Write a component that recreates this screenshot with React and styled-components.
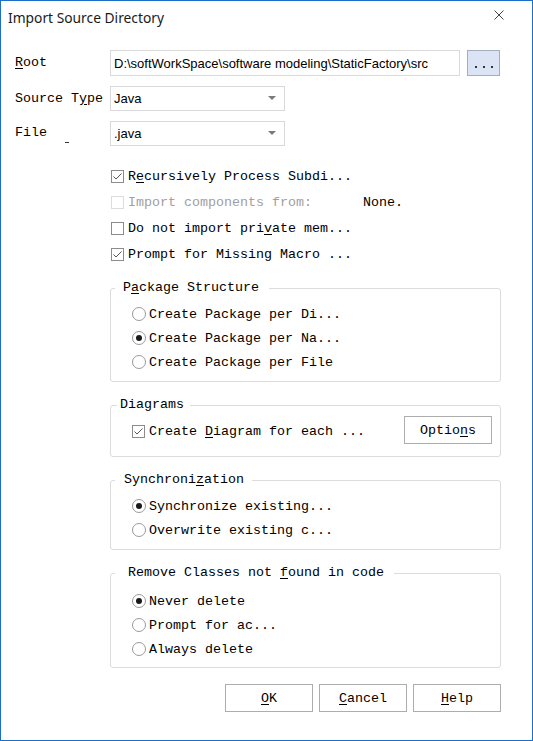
import React from 'react';
import styled, { createGlobalStyle } from 'styled-components';

const mono = `"Liberation Mono", "DejaVu Sans Mono", monospace`;
const sans = `"Liberation Sans", Arial, sans-serif`;

const Global = createGlobalStyle`
  html, body { margin: 0; padding: 0; background: #fff; }
  body { font-family: ${mono}; color: #000; }
  * { box-sizing: border-box; }
`;

const Window = styled.div`
  width: 533px;
  height: 741px;
  border: 1px solid #1b6fc9;
  background: #fff;
  display: flex;
  flex-direction: column;
  font-family: ${mono};
  font-size: 13.33px;
`;

const TitleBar = styled.div`
  height: 34px;
  display: flex;
  align-items: center;
  justify-content: space-between;
  padding-left: 7px;
`;

const Title = styled.div`
  font-family: "Noto Sans", "Open Sans", sans-serif;
  font-size: 13.8px;
  color: #1a1a1a;
  margin-top: -1px;
`;

const CloseButton = styled.div`
  width: 28px;
  height: 28px;
  margin-right: 19px;
  margin-bottom: 6px;
  display: flex;
  align-items: center;
  justify-content: center;
`;

const Body = styled.div`
  padding: 15px 31px 0 14px;
  display: flex;
  flex-direction: column;
`;

const FormGrid = styled.div`
  display: grid;
  grid-template-columns: 95px 1fr;
  row-gap: 10px;
  align-items: center;
`;

const Label = styled.div`
  font-family: ${mono};
  font-size: 13.33px;
  line-height: 16px;
  white-space: pre;
`;

const U = styled.span`
  text-decoration: underline;
  text-underline-offset: 2px;
`;

const SpaceMark = styled.span`
  display: inline-block;
  width: 4px;
  height: 1px;
  background: #333;
  vertical-align: -7px;
  margin-left: 18px;
`;

const FieldRow = styled.div`
  display: flex;
  gap: 7px;
  align-items: stretch;
`;

const TextField = styled.div`
  width: 350px;
  height: 26px;
  border: 1px solid #d9d9d9;
  display: flex;
  align-items: center;
  padding-left: 3px;
  font-family: ${sans};
  font-size: 13px;
  white-space: nowrap;
  overflow: hidden;
`;

const BrowseButton = styled.div`
  width: 33px;
  height: 26px;
  background: #dae4f4;
  border: 1px solid #a3adbd;
  display: flex;
  align-items: flex-end;
  justify-content: center;
  padding-bottom: 7px;
  gap: 6px;
`;

const Dot = styled.span`
  width: 2px;
  height: 2px;
  background: #333;
`;

const Select = styled.div`
  width: 175px;
  height: 25px;
  border: 1px solid #d9d9d9;
  display: flex;
  align-items: center;
  justify-content: space-between;
  padding: 0 8px 0 3px;
  font-family: ${sans};
  font-size: 13px;
`;

const Options = styled.div`
  margin-left: 95px;
  margin-top: 17px;
  display: flex;
  flex-direction: column;
`;

const CheckRow = styled.div`
  height: 26px;
  display: flex;
  align-items: center;
  padding-left: 1px;
  color: ${(p) => (p.$disabled ? '#a0a0a0' : '#000')};
  white-space: pre;
`;

const Box = styled.span`
  width: 13px;
  height: 13px;
  border: 1px solid ${(p) => (p.$disabled ? '#dcdcdc' : '#8c8c8c')};
  background: #fff;
  margin-right: 4px;
  display: inline-flex;
  align-items: center;
  justify-content: center;
  flex: none;
`;

const Value = styled.span`
  margin-left: 51px;
  color: #000;
`;

const Group = styled.fieldset`
  margin: ${(p) => p.$mt}px 0 0 0;
  border: 1px solid #dcdcdc;
  border-radius: 3px;
  padding: 0 4px ${(p) => p.$pb}px 4px;
  min-inline-size: 0;
`;

const Legend = styled.legend`
  padding: 0 ${(p) => p.$pr}px 0 ${(p) => p.$pl}px;
  margin-left: ${(p) => p.$ml || 0}px;
  line-height: 16px;
  font-size: 13.33px;
  white-space: pre;
`;

const GroupBody = styled.div`
  padding-top: ${(p) => p.$pt}px;
  padding-left: 17px;
  display: flex;
  flex-direction: column;
`;

const RadioRow = styled.div`
  height: 24px;
  display: flex;
  align-items: center;
  white-space: pre;
`;

const Circle = styled.span`
  width: 14px;
  height: 14px;
  border-radius: 50%;
  border: 1px solid #9a9a9a;
  background: #fff;
  margin-right: 3px;
  display: inline-flex;
  align-items: center;
  justify-content: center;
  flex: none;
  &::after {
    content: '';
    width: 6px;
    height: 6px;
    border-radius: 50%;
    background: ${(p) => (p.$on ? '#1a1a1a' : 'transparent')};
  }
`;

const DiagramRow = styled.div`
  height: 28px;
  display: flex;
  align-items: center;
  justify-content: space-between;
  padding-right: 4px;
  white-space: pre;
`;

const DiagramCheck = styled.div`
  display: flex;
  align-items: center;
  margin-top: 3px;
`;

const PushButton = styled.div`
  width: ${(p) => p.$w}px;
  height: 28px;
  border: 1px solid #adadad;
  background: #fff;
  display: flex;
  align-items: center;
  justify-content: center;
  white-space: pre;
`;

const ButtonBar = styled.div`
  margin-top: 16px;
  display: flex;
  justify-content: flex-end;
  gap: 6px;
`;

const CheckMark = () => (
  <svg width="11" height="11" viewBox="0 0 11 11">
    <polyline points="1.5,5.5 4,8 9.5,2.5" fill="none" stroke="#555" strokeWidth="1" />
  </svg>
);

const Check = ({ on, disabled }) => (
  <Box $disabled={disabled}>{on && <CheckMark />}</Box>
);

const Radio = ({ on, children }) => (
  <RadioRow>
    <Circle $on={on} />
    {children}
  </RadioRow>
);

const Arrow = () => (
  <svg width="8" height="5" viewBox="0 0 8 5">
    <polygon points="0,0 8,0 4,4" fill="#7a7a7a" />
  </svg>
);

export default function App() {
  return (
    <>
      <Global />
      <Window>
        <TitleBar>
          <Title>Import Source Directory</Title>
          <CloseButton>
            <svg width="10" height="10" viewBox="0 0 10 10">
              <path d="M0.5 0.5 L9.5 9.5 M9.5 0.5 L0.5 9.5" stroke="#444" strokeWidth="1" />
            </svg>
          </CloseButton>
        </TitleBar>
        <Body>
          <FormGrid>
            <Label><U>R</U>oot</Label>
            <FieldRow>
              <TextField>D:\softWorkSpace\software modeling\StaticFactory\src</TextField>
              <BrowseButton><Dot /><Dot /><Dot /></BrowseButton>
            </FieldRow>
            <Label>Source T<U>y</U>pe</Label>
            <Select>Java<Arrow /></Select>
            <Label>File<SpaceMark /></Label>
            <Select>.java<Arrow /></Select>
          </FormGrid>

          <Options>
            <CheckRow><Check on />R<U>e</U>cursively Process Subdi...</CheckRow>
            <CheckRow $disabled><Check disabled />Import components from:<Value>None.</Value></CheckRow>
            <CheckRow><Check />Do not import pri<U>v</U>ate mem...</CheckRow>
            <CheckRow><Check on />Prompt for Missing Macro ...</CheckRow>

            <Group $mt={13} $pb={7}>
              <Legend $pl={8} $pr={10}>P<U>a</U>ckage Structure</Legend>
              <GroupBody $pt={6}>
                <Radio>Create Package per Di...</Radio>
                <Radio on>Create Package per Na...</Radio>
                <Radio>Create Package per File</Radio>
              </GroupBody>
            </Group>

            <Group $mt={15} $pb={12}>
              <Legend $ml={2} $pl={3} $pr={6}>Diagrams</Legend>
              <GroupBody $pt={3}>
                <DiagramRow>
                  <DiagramCheck><Check on />Create <U>D</U>iagram for each ...</DiagramCheck>
                  <PushButton $w={88}>Optio<U>n</U>s</PushButton>
                </DiagramRow>
              </GroupBody>
            </Group>

            <Group $mt={15} $pb={7}>
              <Legend $pl={9} $pr={8}>Synchroni<U>z</U>ation</Legend>
              <GroupBody $pt={6}>
                <Radio on>Synchronize existing...</Radio>
                <Radio>Overwrite existing c...</Radio>
              </GroupBody>
            </Group>

            <Group $mt={15} $pb={6}>
              <Legend $pl={13} $pr={10}>Remove Classes not <U>f</U>ound in code</Legend>
              <GroupBody $pt={8}>
                <Radio on>Never delete</Radio>
                <Radio>Prompt for ac...</Radio>
                <Radio>Always delete</Radio>
              </GroupBody>
            </Group>

            <ButtonBar>
              <PushButton $w={88}><U>O</U>K</PushButton>
              <PushButton $w={88}><U>C</U>ancel</PushButton>
              <PushButton $w={88}><U>H</U>elp</PushButton>
            </ButtonBar>
          </Options>
        </Body>
      </Window>
    </>
  );
}
